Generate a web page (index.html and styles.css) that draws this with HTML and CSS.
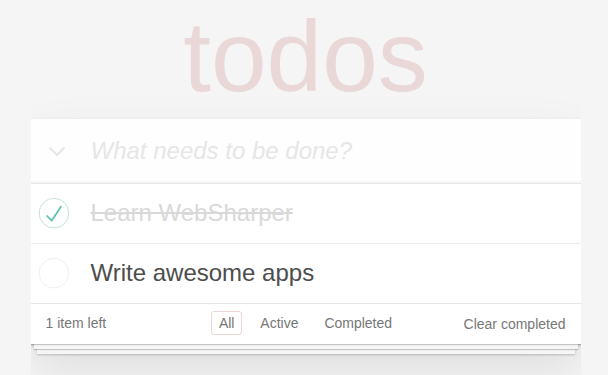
FILE: index.html
```html
<!DOCTYPE html>
<html>

<head>
  <title>WebSharper • TodoMVC</title>
  <link rel="stylesheet" href="styles.css">
</head>

<body>

  <h1 class="title">todos</h1>

  <section class="todoapp">
    <header class="header">
      <label class="toggle-all" for="toggleAll">
        <svg width="18" height="11" viewBox="0 0 18 11">
          <polyline points="1.5,1.5 9,9 16.5,1.5" fill="none" stroke="#e6e6e6" stroke-width="2.2" />
        </svg>
      </label>
      <input type="checkbox" id="toggleAll" class="toggle-all-input">
      <input class="new-todo" placeholder="What needs to be done?" autofocus>
    </header>

    <section class="main">
      <ul class="todo-list">
        <li class="completed">
          <svg class="toggle" width="40" height="40" viewBox="-10 -18 100 135">
            <circle cx="50" cy="50" r="50" fill="none" stroke="#bddad5" stroke-width="3" />
            <path fill="#5dc2af" d="M72 25L42 71 27 56l-4 4 20 20 34-52z" />
          </svg>
          <label>Learn WebSharper</label>
        </li>
        <li>
          <svg class="toggle" width="40" height="40" viewBox="-10 -18 100 135">
            <circle cx="50" cy="50" r="50" fill="none" stroke="#ededed" stroke-width="3" />
          </svg>
          <label>Write awesome apps</label>
        </li>
      </ul>
    </section>

    <footer class="footer">
      <span class="todo-count"><strong>1</strong> item left</span>
      <ul class="filters">
        <li><a class="selected" href="#/">All</a></li>
        <li><a href="#/active">Active</a></li>
        <li><a href="#/completed">Completed</a></li>
      </ul>
      <button class="clear-completed">Clear completed</button>
    </footer>
  </section>

</body>

</html>
```

FILE: styles.css
```css
html,
body {
  margin: 0;
  padding: 0;
}

html {
  padding-left: 3px;
}

body {
  font: 14px "Liberation Sans", Arial, sans-serif;
  line-height: 1.4em;
  background: #f5f5f5;
  color: #4d4d4d;
  min-width: 230px;
  max-width: 550px;
  margin: 0 auto;
}

.title {
  margin: 0 0 7px;
  font-size: 100px;
  font-weight: normal;
  line-height: 112px;
  text-align: center;
  color: rgba(175, 47, 47, 0.15);
}

.todoapp {
  background: #fff;
  margin-bottom: 40px;
  box-shadow: 0 2px 4px 0 rgba(0, 0, 0, 0.2),
    0 25px 50px 0 rgba(0, 0, 0, 0.1);
}

.header {
  display: flex;
  align-items: center;
  background: rgba(0, 0, 0, 0.003);
  box-shadow: inset 0 -2px 1px rgba(0, 0, 0, 0.03);
}

.toggle-all {
  display: flex;
  width: 60px;
  padding-left: 17px;
  box-sizing: border-box;
  cursor: pointer;
}

.toggle-all-input {
  display: none;
}

.new-todo {
  flex: 1;
  min-width: 0;
  height: 32px;
  padding: 16px 16px 16px 0;
  border: 0;
  outline: none;
  background: transparent;
  font: inherit;
  font-size: 24px;
  line-height: 32px;
  color: inherit;
}

.new-todo::placeholder {
  font-style: italic;
  color: #e6e6e6;
}

.main {
  border-top: 1px solid #e6e6e6;
}

.todo-list {
  margin: 0;
  padding: 0;
  list-style: none;
}

.todo-list li {
  display: flex;
  align-items: center;
  font-size: 24px;
  border-bottom: 1px solid #ededed;
}

.todo-list li:last-child {
  border-bottom: none;
}

.todo-list .toggle {
  flex: none;
}

.todo-list label {
  flex: 1;
  padding: 15px 15px 15px 20px;
  line-height: 1.2;
  word-break: break-all;
}

.todo-list li.completed label {
  color: #d9d9d9;
  text-decoration: line-through;
}

.footer {
  position: relative;
  display: grid;
  grid-template-columns: 1fr auto 1fr;
  align-items: center;
  height: 20px;
  padding: 10px 15px;
  color: #777;
  border-top: 1px solid #e6e6e6;
}

.footer::before {
  content: '';
  position: absolute;
  right: 0;
  bottom: 0;
  left: 0;
  height: 50px;
  overflow: hidden;
  box-shadow: 0 1px 1px rgba(0, 0, 0, 0.2),
    0 8px 0 -3px #f6f6f6,
    0 9px 1px -3px rgba(0, 0, 0, 0.2),
    0 16px 0 -6px #f6f6f6,
    0 17px 2px -6px rgba(0, 0, 0, 0.2);
}

.todo-count strong {
  font-weight: normal;
}

.filters {
  margin: 0;
  padding: 0;
  list-style: none;
}

.filters li {
  display: inline;
}

.filters li a {
  color: inherit;
  margin: 3px;
  padding: 3px 7px;
  text-decoration: none;
  border: 1px solid transparent;
  border-radius: 3px;
}

.filters li a:hover {
  border-color: rgba(175, 47, 47, 0.1);
}

.filters li a.selected {
  border-color: rgba(175, 47, 47, 0.2);
}

.clear-completed {
  justify-self: end;
  padding: 0;
  border: 0;
  background: none;
  font: inherit;
  line-height: 20px;
  color: inherit;
  cursor: pointer;
}

.clear-completed:hover {
  text-decoration: underline;
}
```
